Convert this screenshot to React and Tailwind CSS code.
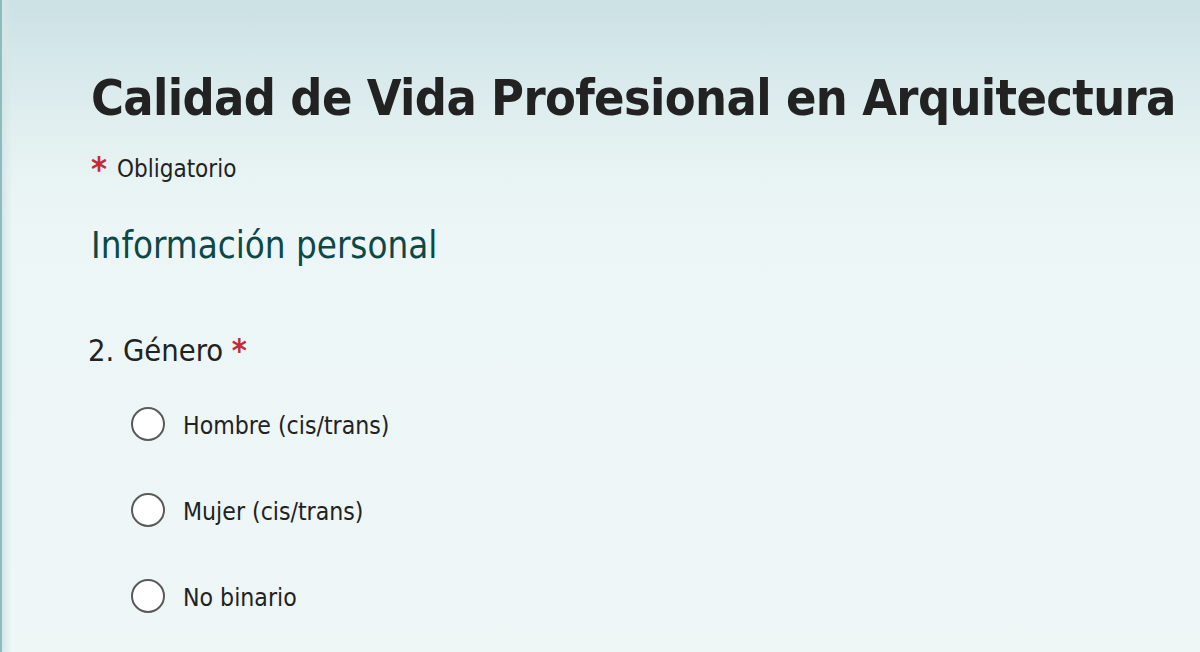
import React from "react";

const font = { fontFamily: '"DejaVu Sans Condensed", "DejaVu Sans", sans-serif' };

function Radio({ label }) {
  return (
    <div className="flex items-center h-[34px]">
      <span className="w-[34px] h-[34px] rounded-full border-2 border-[#5a5a5a] bg-white shrink-0" />
      <span className="ml-[18px] pt-[4px] text-[24.6px] leading-none text-[#222222] whitespace-nowrap">{label}</span>
    </div>
  );
}

export default function App() {
  return (
    <div
      className="relative w-[1200px] h-[652px] overflow-hidden bg-[linear-gradient(180deg,#cbe1e4_0%,#d9eaec_12%,#e6f2f2_24%,#edf6f6_36%,#eef6f6_100%)]"
      style={font}
    >
      <div className="absolute left-0 top-0 bottom-0 w-[2px] bg-[#8fbbbd]" />
      <div className="absolute left-[2px] top-0 bottom-0 w-[10px] bg-[linear-gradient(90deg,#d3e7e8,transparent)]" />
      <div className="flex flex-col pl-[91px] pt-[73px]">
        <h1 className="text-[50px] leading-[50px] font-bold text-[#222222] whitespace-nowrap tracking-[-0.65px]">
          Calidad de Vida Profesional en Arquitectura
        </h1>
        <div className="flex mt-[34px] text-[24px] leading-none text-[#222222]">
          <span className="text-[#c42b36] mr-[10px] text-[34px] font-bold leading-[24px]">*</span>
          <span>Obligatorio</span>
        </div>
        <h2 className="mt-[47px] text-[36.4px] leading-[36px] text-[#0d4848] whitespace-nowrap">Información personal</h2>
        <div className="mt-[71px] text-[30.6px] leading-[31px] text-[#222222] -ml-[3px] whitespace-nowrap">
          2. Género <span className="text-[#c42b36] text-[32px] font-bold">*</span>
        </div>
        <div className="flex flex-col gap-[52px] mt-[41px] pl-[40px]">
          <Radio label="Hombre (cis/trans)" />
          <Radio label="Mujer (cis/trans)" />
          <Radio label="No binario" />
        </div>
      </div>
    </div>
  );
}
